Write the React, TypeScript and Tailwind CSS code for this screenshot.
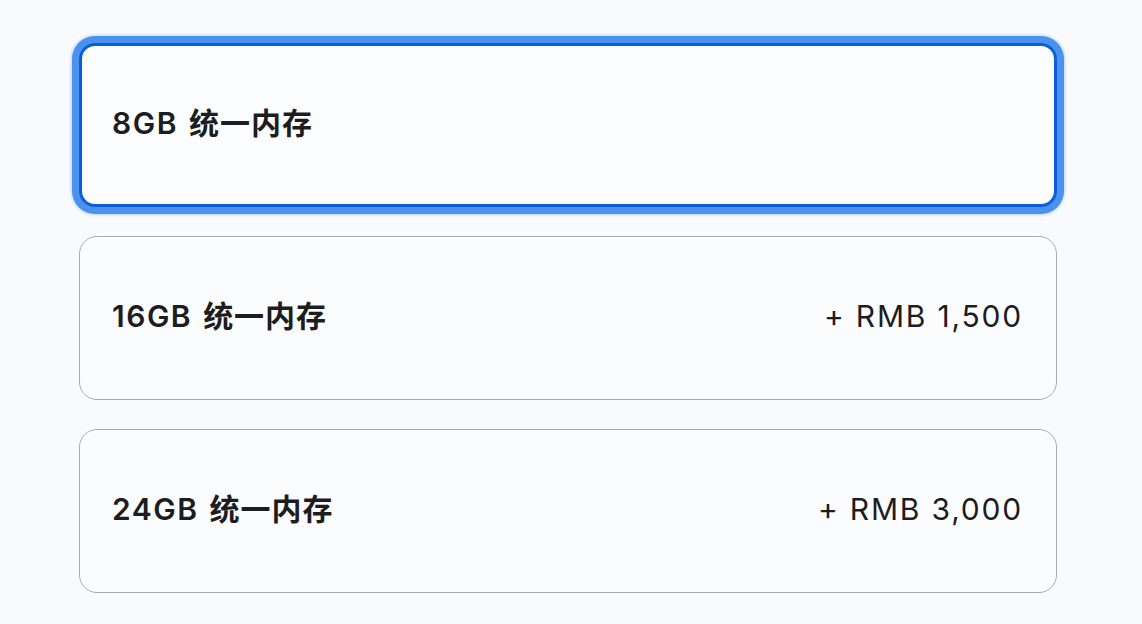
const options = [
  { label: '8GB', cn: '统一内存', price: '', selected: true },
  { label: '16GB', cn: '统一内存', price: '+ RMB 1,500', selected: false },
  { label: '24GB', cn: '统一内存', price: '+ RMB 3,000', selected: false },
];

export default function App() {
  return (
    <div
      className="flex h-[624px] w-[1142px] flex-col gap-[29px] bg-[#f9fafc] pl-[79px] pr-[85px] pt-[43px] text-[#1d1d1f]"
      style={{ fontFamily: 'Inter, "Noto Sans CJK SC", sans-serif' }}
    >
      {options.map((o) => (
        <div
          key={o.label}
          className={
            o.selected
              ? 'flex h-[164px] items-center justify-between rounded-[16px] border-[3px] border-[#0a5fd6] bg-[#fcfdff] pb-[4px] pl-[30px] pr-[31px] shadow-[0_0_0_7px_#4a92ee,0_0_3px_8px_#bcd6f7]'
              : 'flex h-[164px] items-center justify-between rounded-[18px] border border-[#a9abb2] bg-[#fbfcfe] pb-[4px] pl-[32px] pr-[33px]'
          }
        >
          <span className="flex items-baseline gap-[11px] text-[30px] font-semibold">
            <span className="tracking-[1.5px]">{o.label}</span>
            <span className="tracking-[1px]">{o.cn}</span>
          </span>
          {o.price && <span className="text-[30px] font-normal tracking-[1.8px]">{o.price}</span>}
        </div>
      ))}
    </div>
  );
}
